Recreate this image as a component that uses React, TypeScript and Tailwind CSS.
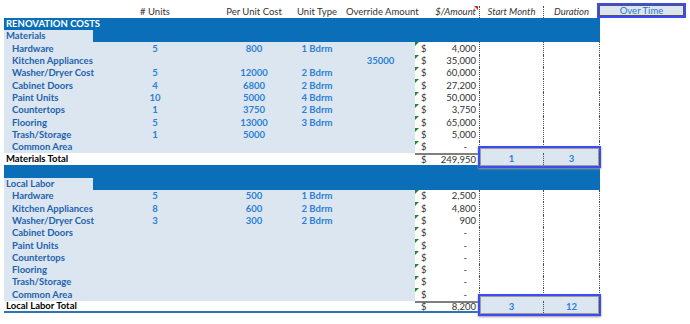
import React from 'react';

interface Item {
  label: string;
  units?: string;
  cost?: string;
  type?: string;
  override?: string;
  amount: string;
}

const materials: Item[] = [
  { label: 'Hardware', units: '5', cost: '800', type: '1 Bdrm', amount: '4,000' },
  { label: 'Kitchen Appliances', override: '35000', amount: '35,000' },
  { label: 'Washer/Dryer Cost', units: '5', cost: '12000', type: '2 Bdrm', amount: '60,000' },
  { label: 'Cabinet Doors', units: '4', cost: '6800', type: '2 Bdrm', amount: '27,200' },
  { label: 'Paint Units', units: '10', cost: '5000', type: '4 Bdrm', amount: '50,000' },
  { label: 'Countertops', units: '1', cost: '3750', type: '2 Bdrm', amount: '3,750' },
  { label: 'Flooring', units: '5', cost: '13000', type: '3 Bdrm', amount: '65,000' },
  { label: 'Trash/Storage', units: '1', cost: '5000', amount: '5,000' },
  { label: 'Common Area', amount: '-' },
];

const labor: Item[] = [
  { label: 'Hardware', units: '5', cost: '500', type: '1 Bdrm', amount: '2,500' },
  { label: 'Kitchen Appliances', units: '8', cost: '600', type: '2 Bdrm', amount: '4,800' },
  { label: 'Washer/Dryer Cost', units: '3', cost: '300', type: '2 Bdrm', amount: '900' },
  { label: 'Cabinet Doors', amount: '-' },
  { label: 'Paint Units', amount: '-' },
  { label: 'Countertops', amount: '-' },
  { label: 'Flooring', amount: '-' },
  { label: 'Trash/Storage', amount: '-' },
  { label: 'Common Area', amount: '-' },
];

const dotted = 'border-r border-dotted border-[#4a4a4a]';

const AmountCell = ({ value, flag }: { value: string; flag?: boolean }) => (
  <div className={`relative flex h-full w-[65px] items-center justify-between pl-[6px] ${dotted} ${value === '-' ? 'pr-[12px]' : 'pr-[3px]'}`}>
    {flag && (
      <span className="absolute left-0 top-0 h-0 w-0 border-r-[4px] border-t-[4px] border-r-transparent border-t-[#1d8a2a]" />
    )}
    <span>$</span>
    <span>{value}</span>
  </div>
);

const DataRow = ({ item }: { item: Item }) => (
  <div className="flex h-[12.3px] items-center">
    <div className="flex h-full w-[411px] items-center bg-[#dce6f1] font-bold">
      <span className="w-[118px] whitespace-nowrap pl-[8px] text-[#1f62ad]">{item.label}</span>
      <span className="w-[66px] text-center text-[#2b7fd4]">{item.units}</span>
      <span className="w-[32px]" />
      <span className="w-[68px] text-center text-[#2b7fd4]">{item.cost}</span>
      <span className="w-[58px] text-center text-[#2b7fd4]">{item.type}</span>
      <span className="w-[69px] text-center text-[#2b7fd4]">{item.override}</span>
    </div>
    <AmountCell value={item.amount} flag />
    <div className={`h-full w-[64px] ${dotted}`} />
    <div className={`h-full w-[56px] ${dotted}`} />
  </div>
);

const BlueRow = ({ children }: { children?: React.ReactNode }) => (
  <div className="flex h-[12.3px] w-[596px] items-center bg-[#0a6fb8] pl-[2px] font-bold text-white">
    {children}
  </div>
);

const TotalRow = ({ label, amount, start, duration, last }: { label: string; amount: string; start: string; duration: string; last?: boolean }) => (
  <div className="flex h-[12.3px] items-center">
    <div className={`flex h-full w-[411px] items-center pl-[2px] font-bold text-black ${last ? 'border-b-2 border-[#2e75b6]' : ''}`}>
      {label}
    </div>
    <div className={`h-full ${last ? 'border-b-2 border-[#2e75b6]' : ''}`}>
      <div className="h-full border-t-2 border-[#7f7f7f]">
        <AmountCell value={amount} />
      </div>
    </div>
    <div className="relative flex h-full w-[120px] font-bold text-[#2b7fd4]">
      <div className="absolute -bottom-[3px] -left-[2px] -right-[1px] -top-[7px] border-2 border-[#3b4cf2] bg-[#dce6f1] shadow-[inset_0_0_0_1px_#9c9c9c,0_1px_2px_#9a9a9a]" />
      <div className={`relative flex h-full w-[64px] items-center justify-center ${dotted}`}>{start}</div>
      <div className={`relative flex h-full w-[56px] items-center justify-center ${dotted}`}>{duration}</div>
    </div>
  </div>
);

export default function App() {
  return (
    <div className="h-[324px] w-[690px] bg-white pl-[4px] pt-[5.5px] font-['Lato','Liberation_Sans',sans-serif] text-[9.5px] leading-none text-[#333]">
      {/* header */}
      <div className="flex h-[12.3px] items-center">
        <span className="w-[118px]" />
        <span className="w-[66px] text-center">{'# Units'}</span>
        <span className="w-[32px]" />
        <span className="w-[68px] whitespace-nowrap text-center">Per Unit Cost</span>
        <span className="w-[58px] whitespace-nowrap text-center">Unit Type</span>
        <span className="w-[69px] whitespace-nowrap text-center">Override Amount</span>
        <div className={`relative flex h-full w-[65px] items-center justify-end pr-[3px] italic ${dotted}`}>
          <span className="absolute right-[1px] top-0 h-0 w-0 border-l-[4px] border-t-[4px] border-l-transparent border-t-[#e02020]" />
          $/Amount
        </div>
        <div className={`flex h-full w-[64px] items-center justify-center italic ${dotted}`}>Start Month</div>
        <div className={`flex h-full w-[56px] items-center justify-center italic ${dotted}`}>Duration</div>
        <div className="relative h-full w-[90px]">
          <div className="absolute -left-[3px] -top-[2.5px] flex h-[15px] w-[89px] items-center justify-center border-2 border-[#3b4cf2] bg-[#dce6f1] text-[#2a76cc] shadow-[inset_0_0_0_1px_#555]">
            Over Time
          </div>
        </div>
      </div>

      <BlueRow>RENOVATION COSTS</BlueRow>
      <div className="flex h-[12.3px] w-[596px] items-center bg-[#0a6fb8] font-bold">
        <span className="flex h-full w-[89px] items-center bg-[#dce6f1] pl-[2px] text-[#1f62ad]">Materials</span>
      </div>
      {materials.map((m) => (
        <DataRow key={'m' + m.label} item={m} />
      ))}
      <TotalRow label="Materials Total" amount="249,950" start="1" duration="3" />

      <BlueRow />
      <div className="flex h-[12.3px] w-[596px] items-center bg-[#0a6fb8] font-bold">
        <span className="flex h-full w-[89px] items-center bg-[#dce6f1] pl-[2px] text-[#1f62ad]">Local Labor</span>
      </div>
      {labor.map((m) => (
        <DataRow key={'l' + m.label} item={m} />
      ))}
      <TotalRow label="Local Labor Total" amount="8,200" start="3" duration="12" last />
    </div>
  );
}
